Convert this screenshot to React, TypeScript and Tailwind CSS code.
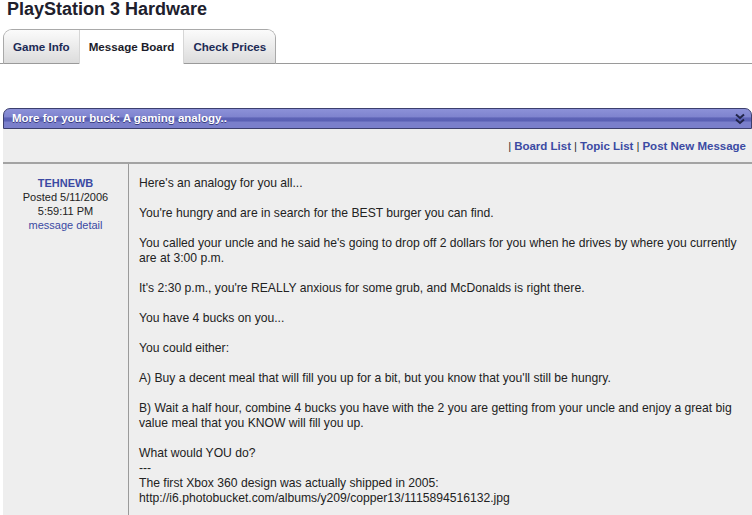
export default function App() {
  return (
    <div className="w-[752px] h-[515px] overflow-hidden bg-white font-['Liberation_Sans',Arial,sans-serif] text-[#222]">
      <h1 className="pl-[7px] text-[18px] leading-[18px] font-bold text-[#20202c]">PlayStation 3 Hardware</h1>

      {/* tabs */}
      <div className="mt-[11px] flex h-[35px] items-end border-b border-[#9a9a9a] pl-[3px]">
        <div className="-mb-px flex h-[35px] overflow-hidden rounded-t-[9px] border border-b-0 border-[#a9a9a9]">
          <div className="flex items-center border-b border-[#9a9a9a] bg-linear-to-b from-[#fbfbfb] to-[#dcdcdc] px-[9px] text-[11.6px] font-bold text-[#1c2a55]">
            Game Info
          </div>
          <div className="flex items-center border-x border-[#d6d6d6] bg-white px-[9px] text-[11.6px] font-bold text-[#1c1c2a]">
            Message Board
          </div>
          <div className="flex items-center border-b border-[#9a9a9a] bg-linear-to-b from-[#fbfbfb] to-[#dcdcdc] px-[9px] text-[11.6px] font-bold text-[#1c2a55]">
            Check Prices
          </div>
        </div>
      </div>

      {/* topic bar */}
      <div className="mt-[44px] ml-[3px] flex h-[21px] items-center justify-between rounded-t-[7px] border border-[#3c3f6e] bg-[linear-gradient(to_bottom,#8c91d8_0%,#7f84cf_40%,#5d63b6_48%,#5a60b4_62%,#7a7fcb_70%,#7a7fcb_100%)] pl-[8px] pr-[4px]">
        <span className="text-[11.5px] font-bold text-white [text-shadow:0_1px_0_#3a3d80]">More for your buck: A gaming analogy..</span>
        <svg width="10" height="12" viewBox="0 0 10 12" className="mr-[2px]">
          <path d="M1 1.5 L5 5 L9 1.5" fill="none" stroke="#22264a" strokeWidth="2" />
          <path d="M1 6.5 L5 10 L9 6.5" fill="none" stroke="#22264a" strokeWidth="2" />
        </svg>
      </div>

      <div className="ml-[3px] h-[400px] bg-[#eeeeee]">
        <div className="flex h-[35px] items-center justify-end border-b-2 border-[#a3a3a3] pr-[6px] pt-[3px] text-[11.5px]">
          <span className="text-[#333]">|</span>
          <span className="mx-[3px] font-bold text-[#3b4aa3]">Board List</span>
          <span className="text-[#333]">|</span>
          <span className="mx-[3px] font-bold text-[#3b4aa3]">Topic List</span>
          <span className="text-[#333]">|</span>
          <span className="ml-[3px] font-bold text-[#3b4aa3]">Post New Message</span>
        </div>

        <div className="flex h-full">
          <div className="w-[126px] shrink-0 border-r border-[#9a9a9a] pt-[12px] text-center text-[11px] leading-[14px]">
            <div className="font-bold text-[#3b4aa3]">TEHNEWB</div>
            <div>Posted 5/11/2006</div>
            <div>5:59:11 PM</div>
            <div className="text-[#3b4aa3]">message detail</div>
          </div>
          <div className="flex-1 pt-[12px] pl-[10px] pr-[2px] text-[12.15px] leading-[15px] text-[#222]">
            <p className="mb-[15px]">Here's an analogy for you all...</p>
            <p className="mb-[15px]">You're hungry and are in search for the BEST burger you can find.</p>
            <p className="mb-[15px]">
              You called your uncle and he said he's going to drop off 2 dollars for you when he drives by where you currently are at 3:00 p.m.
            </p>
            <p className="mb-[15px]">It's 2:30 p.m., you're REALLY anxious for some grub, and McDonalds is right there.</p>
            <p className="mb-[15px]">You have 4 bucks on you...</p>
            <p className="mb-[15px]">You could either:</p>
            <p className="mb-[15px]">A) Buy a decent meal that will fill you up for a bit, but you know that you'll still be hungry.</p>
            <p className="mb-[15px]">
              B) Wait a half hour, combine 4 bucks you have with the 2 you are getting from your uncle and enjoy a great big value meal that you KNOW will fill you up.
            </p>
            <p>What would YOU do?</p>
            <p>---</p>
            <p>The first Xbox 360 design was actually shipped in 2005:</p>
            <p>http://i6.photobucket.com/albums/y209/copper13/1115894516132.jpg</p>
          </div>
        </div>
      </div>
    </div>
  )
}
